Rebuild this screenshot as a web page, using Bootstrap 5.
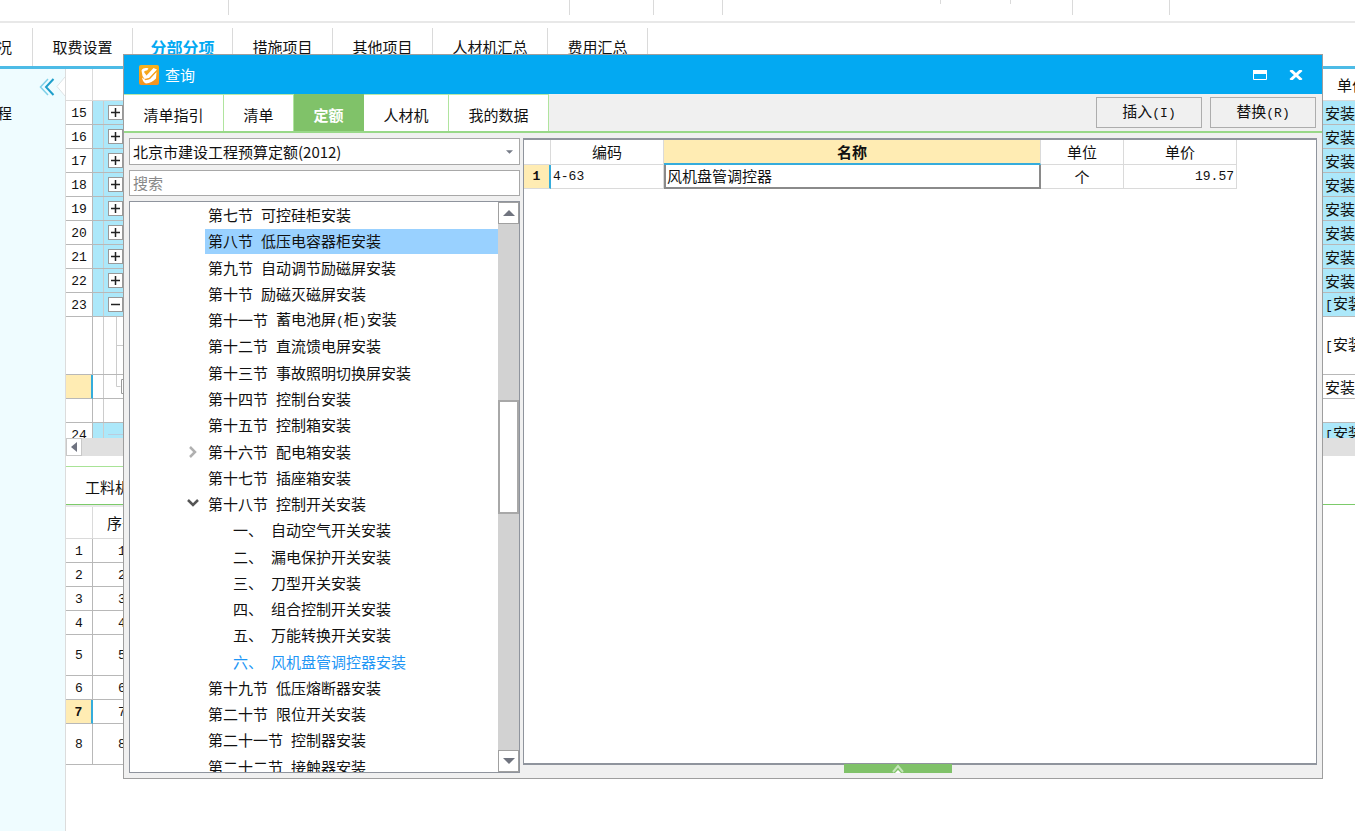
<!DOCTYPE html>
<html lang="zh-CN">
<head>
<meta charset="utf-8">
<meta name="viewport" content="width=device-width, initial-scale=1">
<title>查询</title>
<link href="https://cdn.jsdelivr.net/npm/bootstrap@5.3.0/dist/css/bootstrap.min.css" rel="stylesheet">
<style>
  :root { --line:#b8b8b8; --soft:#dadada; --sky:#ace8fa; --amber:#ffecb3; --leaf:#80c269; --blue:#03a9f2; --mark:#35acdc; }
  body { font-family:"Noto Sans CJK SC",sans-serif; font-size:15px; line-height:20px; color:#111; background:#fff; }
  .app { min-height:100vh; overflow:hidden; }
  .digits { font-family:"Liberation Mono",monospace; font-size:13px; }

  /* ribbon and project tabs */
  .ribbon { height:23px; border-bottom:2px solid #e8e8e8; }
  .ribbon-group { height:15px; border-right:1px solid var(--soft); }
  .ribbon-group.brief { height:4px; }
  .project-tabs { height:46px; border-bottom:3px solid #4dbbe6; padding-top:5px; }
  .project-tabs a { height:38px; width:100px; border-right:1px solid var(--soft); color:#111; text-decoration:none; white-space:nowrap; }
  .project-tabs a.wide { width:115px; }
  .project-tabs a.first { width:33px; padding-right:20px; }
  .project-tabs a.active { color:var(--blue); font-weight:700; font-size:16px; }

  /* side panel */
  .side { width:66px; background:#effcff; border-right:1px solid #dcdcdc; }
  .side-toggle { height:34px; padding:0; border:0; background:none; }
  .side-node { width:12px; height:20px; color:#111; text-decoration:none; }

  /* background grids */
  .sheet { table-layout:fixed; border-collapse:separate; border-spacing:0; }
  .sheet th, .sheet td { padding:0; height:24px; border-bottom:1px solid var(--line); border-right:1px solid var(--line); white-space:nowrap; overflow:hidden; font-weight:400; }
  .sheet thead th { height:32px; border-color:var(--soft); }
  .sheet th.digits, .sheet td.digits { text-align:center; padding-top:2px; }
  .sheet .tree-cell { background:linear-gradient(#ccc,#ccc) 10px 0 / 1px 100% no-repeat; padding-left:15px; line-height:0; }
  .sheet .group-row td { background-color:var(--sky); }
  .sheet .tail { padding-left:2px; border-right:0; }
  .sheet thead .tail { padding-left:14px; }
  .sheet .picked { background:var(--amber); border-right:2px solid var(--mark); font-weight:700; }
  .sheet .tall > * { height:58px; }
  .sheet .mid > * { height:41px; }
  .items-pane { height:369px; overflow:hidden; }
  .expander { width:15px; height:15px; padding:0; border:1px solid #999; background:#fff; line-height:0; }
  .hbar { height:18px; background:#e0e0e0; }
  .hbar button { width:16px; padding:0; border:1px solid #c8c8c8; background:#fff; line-height:0; }
  .detail-tabs { margin-top:10px; height:39px; border-bottom:1px solid #7ccb6a; }
  .detail-tabs a { color:#111; text-decoration:none; padding:2px 19px 0 19px; border-top:1px solid #a8e396; }
  .detail-sheet { width:86px; border-top:2px solid #e8e8e8; }

  /* query window floating over the workspace */
  .query { position:absolute; top:54px; bottom:52px; left:123px; right:32px; background:#f0f0f0; border:1px solid #9e9e9e; }
  .query-title { height:39px; background:var(--blue); color:#fff; padding:0 19px 0 15px; gap:6px; }
  .query-title button { padding:0; border:0; background:none; line-height:0; }
  .query-tabs { height:39px; border-bottom:2px solid #98d888; padding-right:6px; }
  .query-tabs .tab { height:37px; border:0; border-top:1px solid #b9e8a9; border-right:1px solid #b0e49e; background:#fff; padding:3px 0 0 0; width:85px; color:#111; }
  .query-tabs .tab.w4 { width:100px; }
  .query-tabs .tab.w2 { width:70px; }
  .query-tabs .tab.active { background:var(--leaf); border-color:var(--leaf); color:#fff; font-weight:700; }
  .push { width:106px; height:31px; border:1px solid #adadad; background:#f0f0f0; padding:0; color:#111; }
  .query-body { padding:5px; gap:3px; min-height:0; }
  .finder { width:391px; gap:5px; }
  .field { height:26px; border:1px solid #a8a8a8; border-radius:0; padding:0 3px; font-size:15px; line-height:20px; color:#111; background-color:#fff; box-shadow:none; }
  select.field { height:27px; background-image:url("data:image/svg+xml,%3Csvg xmlns='http://www.w3.org/2000/svg' viewBox='0 0 8 4'%3E%3Cpath d='M0 0h8L4 4z' fill='%23777c88'/%3E%3C/svg%3E"); background-size:7px 4px; background-position:right 6px center; }
  input.field { padding-bottom:2px; }
  .field::placeholder { color:#888; }
  .frame { border:1px solid #8f949d; background:#fff; min-height:0; }
  .tree { height:calc(100% + 8px); margin:0; padding:0; list-style:none; min-width:0; }
  .tree li { flex:1 1 0; min-height:0; padding-left:57px; }
  .tree .caret { width:18px; line-height:0; padding:0; border:0; background:none; text-align:left; }
  .tree a { height:25px; margin-left:18px; padding-left:3px; gap:8px; color:#111; text-decoration:none; white-space:nowrap; }
  .tree li.has-caret a { margin-left:0; }
  .tree li.leaf { padding-left:82px; }
  .tree a.hot { background:#99d1ff; }
  .tree a.current { color:#1e96f5; }
  .vbar { width:21px; background:#d2d2d2; }
  .vbar button { height:22px; padding:0; border:1px solid #a0a0a0; background:#fff; line-height:0; }
  .vbar .thumb { height:114px; border:2px solid #a8a8a8; background:#fff; }
  .result-frame { margin-bottom:8px; border-width:2px 1px 2px 1px; }
  .result { width:713px; table-layout:fixed; border-collapse:separate; border-spacing:0; }
  .result th, .result td { height:24px; padding:0 2px; border-right:1px solid var(--soft); border-bottom:1px solid var(--soft); font-weight:400; white-space:nowrap; }
  .result thead th { height:25px; text-align:center; }
  .result thead th.sorted { background:var(--amber); border-bottom:2px solid var(--mark); font-weight:700; }
  .result tbody th { background:var(--amber); border-right:2px solid var(--mark); text-align:center; font-weight:700; }
  .result td.editing { border:2px solid #8a8a8a; border-top:0; padding:0 1px; }
  .handle { position:absolute; bottom:5px; left:60.1%; width:108px; height:9px; padding:0; border:0; background:var(--leaf); line-height:0; }
</style>
</head>
<body>
<div class="app d-flex flex-column position-relative">
  <div class="ribbon d-flex">
    <div class="ribbon-group" style="width:229px"></div>
    <div class="ribbon-group" style="width:341px"></div>
    <div class="ribbon-group" style="width:84px"></div>
    <div class="ribbon-group" style="width:69px"></div>
    <div class="ribbon-group brief" style="width:218px"></div>
    <div class="ribbon-group brief" style="width:70px"></div>
    <div class="ribbon-group" style="width:62px"></div>
    <div class="ribbon-group" style="width:97px"></div>
  </div>
  <nav class="project-tabs d-flex">
    <a href="#" class="first d-flex align-items-center justify-content-end">况</a>
    <a href="#" class="d-flex align-items-center justify-content-center">取费设置</a>
    <a href="#" class="active d-flex align-items-center justify-content-center">分部分项</a>
    <a href="#" class="d-flex align-items-center justify-content-center">措施项目</a>
    <a href="#" class="d-flex align-items-center justify-content-center">其他项目</a>
    <a href="#" class="wide d-flex align-items-center justify-content-center">人材机汇总</a>
    <a href="#" class="d-flex align-items-center justify-content-center">费用汇总</a>
  </nav>

  <div class="d-flex flex-grow-1">
    <aside class="side flex-shrink-0">
      <button class="side-toggle d-flex justify-content-end w-100" aria-label="收起">
        <svg width="27" height="34" viewBox="0 0 27 34"><path d="M27 8L19 17.500l8 9.500z" fill="#fff"/><path d="M27 8L19 17.500l8 9.500" fill="none" stroke="#dde3e5"/><path d="M10 10l-7.500 8 7.500 8" fill="none" stroke="#7fd0e8" stroke-width="1.500"/><path d="M15.500 10L8 18l7.500 8" fill="none" stroke="#1f9fcb" stroke-width="2"/></svg>
      </button>
      <a href="#" class="side-node d-flex justify-content-end">程</a>
    </aside>

    <main class="flex-grow-1 overflow-hidden">
      <div class="items-pane">
        <table class="sheet w-100">
          <colgroup><col style="width:27px"><col><col style="width:32px"></colgroup>
          <thead><tr><th></th><th></th><th class="tail">单价</th></tr></thead>
          <tbody id="items"></tbody>
        </table>
      </div>
      <div class="hbar d-flex"><button aria-label="向左"><svg width="8" height="10"><path d="M7 0v10L1 5z" fill="#6f7380"/></svg></button></div>
      <nav class="detail-tabs d-flex align-items-stretch"><a href="#" class="d-flex align-items-center">工料机显示</a></nav>
      <table class="sheet detail-sheet">
        <colgroup><col style="width:27px"><col></colgroup>
        <thead><tr><th></th><th class="text-center">序号</th></tr></thead>
        <tbody id="details"></tbody>
      </table>
    </main>
  </div>

  <section class="query d-flex flex-column" role="dialog" aria-labelledby="qt">
    <header class="query-title d-flex align-items-center flex-shrink-0">
      <svg width="20" height="20" viewBox="0 0 20 20"><defs><linearGradient id="og" x2="0" y2="1"><stop stop-color="#f6b21c"/><stop offset="1" stop-color="#f5921e"/></linearGradient></defs><rect width="20" height="20" rx="2" fill="url(#og)"/><path d="M2.500 5.500C4 3 6.500 2.500 9.500 3.500L8 5.500c-1.500 0-2.500.5-3 1.500l2.500 3.500L14.500 3l3.500 1.500-8 8.500-4.500 1-2-3z" fill="#fff"/><path d="M3 12.500l3.500 2.500 4.500-1 6.500-7-.5 6.500c-3 3-6 4.500-10 5-2-.5-3.500-3-4-6z" fill="#fff"/><path d="M6.500 14.800l4-1.200 6.500-6.600" stroke="#f5a01d" stroke-width=".8" fill="none"/></svg>
      <span id="qt">查询</span>
      <div class="ms-auto d-flex align-items-center" style="gap:22px">
        <button aria-label="最大化"><svg width="14" height="10"><path d="M.5.500h13v9H.5z" fill="none" stroke="#fff"/><path d="M0 0h14v4H0z" fill="#fff"/></svg></button>
        <button aria-label="关闭"><svg width="14" height="10"><path d="M1.500 0l11 10M12.500 0l-11 10" stroke="#fff" stroke-width="3"/></svg></button>
      </div>
    </header>
    <div class="query-tabs d-flex flex-shrink-0">
      <button class="tab w4">清单指引</button><button class="tab w2">清单</button><button class="tab w2 active">定额</button><button class="tab">人材机</button><button class="tab w4">我的数据</button>
      <div class="ms-auto d-flex align-items-center gap-2">
        <button class="push">插入<span class="digits">(I)</span></button><button class="push">替换<span class="digits">(R)</span></button>
      </div>
    </div>
    <div class="query-body d-flex flex-grow-1">
      <div class="finder d-flex flex-column flex-shrink-0">
        <select class="form-select field flex-shrink-0" aria-label="定额库"><option>北京市建设工程预算定额(2012)</option></select>
        <input class="form-control field flex-shrink-0" type="text" placeholder="搜索" aria-label="搜索">
        <div class="frame d-flex flex-grow-1 overflow-hidden">
          <ul class="tree d-flex flex-column flex-grow-1" id="tree"></ul>
          <div class="vbar d-flex flex-column flex-shrink-0">
            <button aria-label="向上"><svg width="12" height="6"><path d="M0 6h12L6 0z" fill="#70747f"/></svg></button>
            <div style="flex:176 1 0"></div><div class="thumb flex-shrink-0"></div><div style="flex:237 1 0"></div>
            <button aria-label="向下"><svg width="12" height="6"><path d="M0 0h12L6 6z" fill="#70747f"/></svg></button>
          </div>
        </div>
      </div>
      <div class="frame result-frame flex-grow-1 overflow-hidden">
        <table class="result">
          <colgroup><col style="width:27px"><col style="width:113px"><col style="width:377px"><col style="width:83px"><col style="width:113px"></colgroup>
          <thead><tr><th></th><th>编码</th><th class="sorted">名称</th><th>单位</th><th>单价</th></tr></thead>
          <tbody><tr><th class="digits">1</th><td class="digits">4-63</td><td class="editing">风机盘管调控器</td><td class="text-center">个</td><td class="digits text-end">19.57</td></tr></tbody>
        </table>
      </div>
    </div>
    <button class="handle" aria-label="展开"><svg width="14" height="9"><path d="M2 8l5-6 5 6" fill="none" stroke="#c5e6ba" stroke-width="2"/><path d="M4 9l3-3 3 3z" fill="#fff"/></svg></button>
  </section>
</div>

<script src="https://cdn.jsdelivr.net/npm/bootstrap@5.3.0/dist/js/bootstrap.bundle.min.js"></script>
<script>
  const box = d => `<button class="expander" aria-label="展开"><svg width="13" height="13"><path d="${d}" stroke="#222" stroke-width="1.500"/></svg></button>`;
  const plus = box('M2 6.500h9M6.500 2v9'), minus = box('M2 6.500h9');
  const bracketed = '<span class="digits">[</span>安装<span class="digits">]</span>';
  let rows = '';
  for (let n = 15; n <= 23; n++)
    rows += `<tr class="group-row"><th class="digits">${n}</th><td class="tree-cell">${n < 23 ? plus : minus}</td><td class="tail">${n < 23 ? '安装' : bracketed}</td></tr>`;
  rows += `<tr class="tall"><th></th><td class="tree-cell"><svg width="16" height="57"><path d="M8.500 0v57M8.500 28.500h8" fill="none" stroke="#ccc"/></svg></td><td class="tail">${bracketed}</td></tr>
    <tr><th class="picked"></th><td class="tree-cell"><svg width="24" height="23"><path d="M8.500 0v11.500h4" fill="none" stroke="#ccc"/><path d="M13.500 4.500h10v14h-10z" fill="#fff" stroke="#999"/></svg></td><td class="tail">安装</td></tr>
    <tr><th></th><td class="tree-cell"></td><td class="tail"></td></tr>
    <tr class="group-row"><th class="digits">24</th><td class="tree-cell"><svg width="24" height="23"><path d="M0 11.500h24" stroke="#bcd"/></svg></td><td class="tail">${bracketed}</td></tr>`;
  document.getElementById('items').innerHTML = rows;

  document.getElementById('details').innerHTML = [1,2,3,4,5,6,7,8].map(n =>
    `<tr class="${n === 5 || n === 8 ? 'mid' : ''}"><th class="digits ${n === 7 ? 'picked' : ''}">${n}</th><td class="digits">${n}</td></tr>`).join('');

  const nodes = ['第七节 可控硅柜安装','第八节 低压电容器柜安装','第九节 自动调节励磁屏安装','第十节 励磁灭磁屏安装','第十一节 蓄电池屏(柜)安装','第十二节 直流馈电屏安装','第十三节 事故照明切换屏安装','第十四节 控制台安装','第十五节 控制箱安装','第十六节 配电箱安装','第十七节 插座箱安装','第十八节 控制开关安装','一、 自动空气开关安装','二、 漏电保护开关安装','三、 刀型开关安装','四、 组合控制开关安装','五、 万能转换开关安装','六、 风机盘管调控器安装','第十九节 低压熔断器安装','第二十节 限位开关安装','第二十一节 控制器安装','第二十二节 接触器安装'];
  const caret = {
    '第十六节': '<button class="caret" aria-label="展开"><svg width="12" height="12"><path d="M3 1l5 5-5 5" fill="none" stroke="#b0b0b0" stroke-width="2.500"/></svg></button>',
    '第十八节': '<button class="caret" aria-label="收起"><svg width="12" height="12"><path d="M1 2l5 5 5-5" fill="none" stroke="#555" stroke-width="2.500"/></svg></button>'
  };
  document.getElementById('tree').innerHTML = nodes.map(t => {
    const [no, name] = t.split(' ');
    const li = 'd-flex align-items-center' + (no.endsWith('、') ? ' leaf' : '') + (caret[no] ? ' has-caret' : '');
    const a = no === '第八节' ? ' hot flex-grow-1' : no === '六、' ? ' current' : '';
    const label = name.replace(/[()]/g, '<span class="digits">$&</span>');
    return `<li class="${li}">${caret[no] || ''}<a href="#" class="d-flex align-items-center${a}"><span>${no} </span><span>${label}</span></a></li>`;
  }).join('');
</script>
</body>
</html>
